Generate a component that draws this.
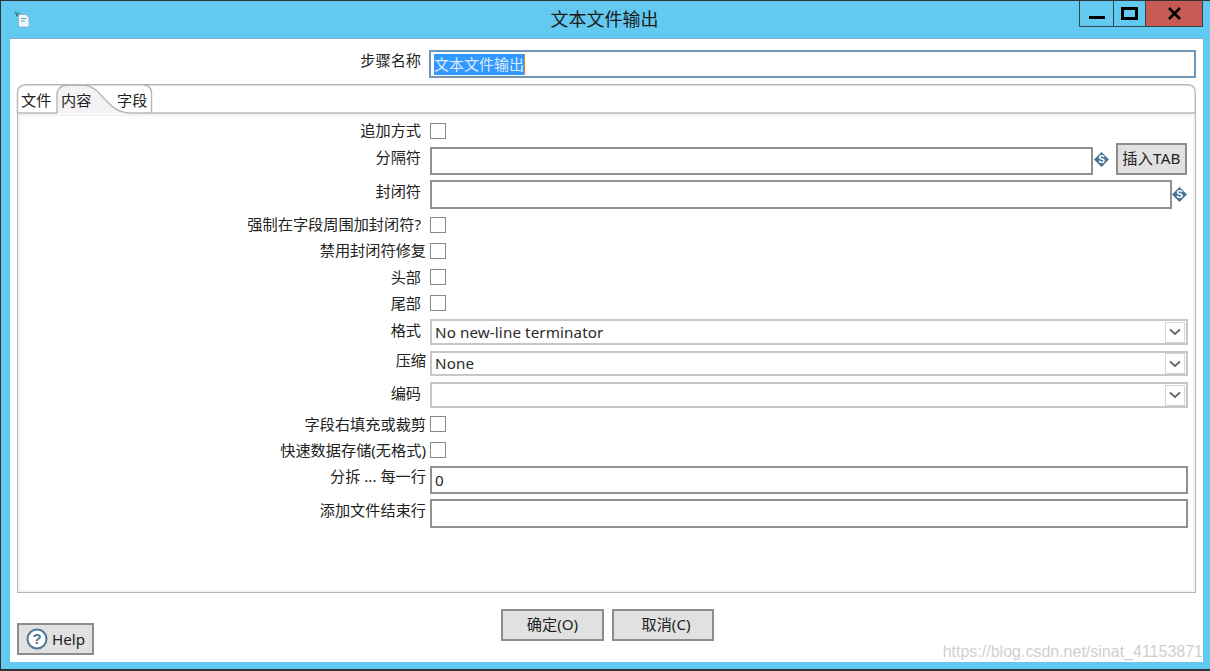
<script>
  const hint = 'x';
</script>

<div class="window">
  <header class="titlebar">
    <div class="appicon">
      <svg width="20" height="20" viewBox="0 0 20 20">
        <path d="M3 2 L7 6 M4 5.5 H7 V2.5" fill="none" stroke="#3d6f8f" stroke-width="1.3"/>
        <path d="M6.5 4.5 H14 L17 7.5 V17 H6.5 Z" fill="#eef7fb" stroke="#8fb4c8" stroke-width="1"/>
        <path d="M9 8.5 H14.5 M9 11 H13" stroke="#6f9ab2" stroke-width="1"/>
      </svg>
    </div>
    <div class="title">文本文件输出</div>
    <div class="controls">
      <div class="ctl min">
        <svg width="16" height="4" viewBox="0 0 16 4"><rect width="16" height="3" fill="#000"/></svg>
      </div>
      <div class="ctl max">
        <svg width="17" height="13" viewBox="0 0 17 13"><rect x="1.5" y="1.5" width="14" height="10" fill="none" stroke="#000" stroke-width="3"/></svg>
      </div>
      <div class="ctl close">
        <svg width="13" height="13" viewBox="0 0 13 13"><path d="M1 1 L12 12 M12 1 L1 12" stroke="#000" stroke-width="2.6"/></svg>
      </div>
    </div>
  </header>

  <main class="client">
    <div class="stepname">
      <div class="label">步骤名称</div>
      <div class="stepinput"><span class="selected">文本文件输出</span></div>
    </div>

    <section class="folder">
      <div class="tabs">
        <svg class="tabshape" width="1180" height="30" viewBox="0 0 1180 30">
          <path d="M1.5 29.5 V9 Q1.5 1 10 .8 H1172 Q1179.3 1 1179.3 9 V30" fill="none" stroke="#b6b6b6" stroke-width="1.4"/>
          <path d="M41 29 V11 Q41 1.5 51 1.2 H68 C86 2 90 28 113 29 Z" fill="#f5f2f6"/>
          <path d="M41 29 V11 Q41 1.5 51 1.2 H68 C86 2 90 28 113 29 H1180" fill="none" stroke="#b6b6b6" stroke-width="1.4"/>
          <path d="M1 29 H41" stroke="#b6b6b6" stroke-width="1.4"/>
          <path d="M135.5 29 V9 Q135.5 2 128 1" fill="none" stroke="#b6b6b6" stroke-width="1.4"/>
        </svg>
        <span class="tab one">文件</span>
        <span class="tab two">内容</span>
        <span class="tab three">字段</span>
      </div>
      <div class="page">
        <div class="pane">
          <div class="row check first"><div class="label up1">追加方式</div><span class="box"></span></div>

          <div class="row tabrow">
            <div class="label">分隔符</div>
            <div class="ctrl">
              <div class="field w663 h28"></div>
              <svg class="var" width="15" height="15" viewBox="0 0 15 15"><path d="M7.5 0 L15 7.5 L7.5 15 L0 7.5 Z" fill="#457394"/><text x="7.5" y="11" text-anchor="middle">S</text></svg>
              <div class="btn insert">插入TAB</div>
            </div>
          </div>

          <div class="row mt5 enc">
            <div class="label">封闭符</div>
            <div class="ctrl">
              <div class="field w742 h29"></div>
              <svg class="var" width="15" height="15" viewBox="0 0 15 15"><path d="M7.5 0 L15 7.5 L7.5 15 L0 7.5 Z" fill="#457394"/><text x="7.5" y="11" text-anchor="middle">S</text></svg>
            </div>
          </div>

          <div class="row check mt3"><div class="label up1">强制在字段周围加封闭符?</div><span class="box"></span></div>
          <div class="row check"><div class="label wide up1">禁用封闭符修复</div><span class="box"></span></div>
          <div class="row check"><div class="label">头部</div><span class="box"></span></div>
          <div class="row check"><div class="label">尾部</div><span class="box"></span></div>

          <div class="row mt3 sel">
            <div class="label lift">格式</div>
            <div class="select"><span>No new-line terminator</span><i class="drop"><svg width="12" height="8" viewBox="0 0 12 8"><path d="M1 1.5 L6 6 L11 1.5" fill="none" stroke="#666" stroke-width="1.8"/></svg></i></div>
          </div>
          <div class="row mt6 sel short">
            <div class="label wide liftmore">压缩</div>
            <div class="select"><span>None</span><i class="drop"><svg width="12" height="8" viewBox="0 0 12 8"><path d="M1 1.5 L6 6 L11 1.5" fill="none" stroke="#666" stroke-width="1.8"/></svg></i></div>
          </div>
          <div class="row mt6 sel">
            <div class="label lift">编码</div>
            <div class="select"><span></span><i class="drop"><svg width="12" height="8" viewBox="0 0 12 8"><path d="M1 1.5 L6 6 L11 1.5" fill="none" stroke="#666" stroke-width="1.8"/></svg></i></div>
          </div>

          <div class="row check mt3"><div class="label wide">字段右填充或裁剪</div><span class="box"></span></div>
          <div class="row check"><div class="label wide">快速数据存储(无格式)</div><span class="box"></span></div>

          <div class="row mt3 txt28">
            <div class="label wide liftsplit">分拆 ... 每一行</div>
            <div class="field full h28 val">0</div>
          </div>
          <div class="row mt5 txt29">
            <div class="label wide liftlast">添加文件结束行</div>
            <div class="field full h29"></div>
          </div>
        </div>
      </div>
    </section>

    <footer class="footer">
      <div class="btn help">
        <svg width="22" height="22" viewBox="0 0 22 22"><circle cx="11" cy="11" r="9.5" fill="#fff" stroke="#4d7596" stroke-width="2"/><text x="11" y="16" text-anchor="middle">?</text></svg>
        <span>Help</span>
      </div>
      <div class="actions">
        <div class="btn action">确定(O)</div>
        <div class="btn action cancel">取消(C)</div>
      </div>
    </footer>
  </main>

  <div class="watermark">https://blog.csdn.net/sinat_41153871</div>
</div>

<style>
  :global(body) { margin: 0; background: #62c9f0; }
  .window {
    position: relative;
    box-sizing: border-box;
    width: 1210px;
    height: 671px;
    overflow: hidden;
    display: flex;
    flex-direction: column;
    background: #62c9f0;
    border-left: 1px solid #2f3336;
    border-top: 1px solid #2f3336;
    border-bottom: 2px solid #2f3336;
    font-family: "Noto Sans", "Noto Sans CJK SC", sans-serif;
    font-size: 15.2px;
    color: #222;
  }
  .titlebar {
    height: 38px;
    flex: none;
    display: grid;
    grid-template-columns: 1fr auto 1fr;
  }
  .appicon { padding: 9px 0 0 11px; }
  .title { font-size: 18px; line-height: 36px; color: #1b1b1b; margin-left: -2px; }
  .controls { justify-self: end; display: flex; height: 26px; margin-right: 7px; border: 1px solid #33454f; border-top: 0; box-sizing: border-box; }
  .ctl { display: flex; justify-content: center; box-sizing: border-box; }
  .min { width: 34px; border-right: 1px solid #33454f; padding-top: 15px; }
  .max { width: 32px; border-right: 1px solid #33454f; padding-top: 6px; }
  .close { width: 56px; background: #c75a52; padding-top: 6px; }

  .client {
    flex: 1;
    display: flex;
    flex-direction: column;
    margin: 0 7px 7px 9px;
    background: #fff;
    box-shadow: 0 -1px 0 #7fb0cc;
  }
  .stepname { display: flex; padding-top: 12px; height: 27px; }
  .stepname .label { width: 411px; text-align: right; line-height: 20px; margin-top: -1px; }
  .stepinput {
    box-sizing: border-box;
    margin: -1px 0 0 8px;
    width: 767px;
    height: 28px;
    border: 2px solid #6f97b5;
    padding: 2px 0 0 3px;
    line-height: 20px;
    font-size: 15px;
  }
  .selected { display: inline-block; height: 21px; background: #3399ff; color: #dcecff; border-right: 1px solid #d9822b; }

  .folder { margin: 6px 0 0 6px; width: 1180px; flex: none; height: 509px; display: flex; flex-direction: column; }
  .tabs { position: relative; height: 30px; flex: none; }
  .tabshape { position: absolute; left: 0; top: 0; }
  .tab { position: absolute; top: 5px; line-height: 22px; }
  .one { left: 5px; }
  .two { left: 45px; }
  .three { left: 101px; }

  .page { flex: 1; display: flex; border: solid #b6b6b6; border-width: 0 1.5px 1.5px; margin-left: 1px; }
  .pane { flex: 1; border: 2px solid #f5f2f6; padding-top: 3px; }

  .row { display: grid; grid-template-columns: 401px 758px; grid-template-rows: minmax(0, 1fr); column-gap: 9px; align-items: center; }
  .check { height: 26px; }
  .first { height: 24px; }
  .tabrow { height: 32px; }
  .enc { height: 29px; }
  .sel { height: 26px; }
  .short { height: 25px; }
  .short .select { height: 25px; padding-bottom: 2px; }
  .short .drop { margin-top: 2px; }
  .txt28 { height: 28px; }
  .txt29 { height: 29px; }
  .mt3 { margin-top: 3px; }
  .mt5 { margin-top: 5px; }
  .mt6 { margin-top: 6px; }

  .label { text-align: right; white-space: nowrap; line-height: 20px; }
  .row .label { justify-self: end; }
  .wide { margin-right: -5px; }
  .up1 { margin-bottom: 2px; }
  .lift { margin-bottom: 4px; }
  .liftmore { margin-bottom: 7px; }
  .liftsplit { margin-bottom: 8px; }
  .liftlast { margin-bottom: 7px; }
  .tabrow .label { margin-bottom: 5px; }
  .enc .label { margin-bottom: 7px; }

  .box { display: block; box-sizing: border-box; width: 16px; height: 16px; border: 1.5px solid #8a8a8a; background: #fff; }
  .ctrl { display: flex; align-items: center; }
  .tabrow .ctrl { height: 32px; align-items: flex-end; }
  .tabrow .var { margin: 0 7px 8px 1px; }
  .field { box-sizing: border-box; border: 2px solid #919191; background: #fff; }
  .w663 { width: 663px; }
  .w742 { width: 742px; }
  .full { width: 758px; }
  .h28 { height: 28px; }
  .h29 { height: 29px; }
  .val { padding: 1px 0 0 3px; line-height: 22px; }
  .var text { fill: #fff; font-size: 10px; font-weight: 700; font-family: "Liberation Sans", sans-serif; }

  .select {
    box-sizing: border-box;
    width: 758px;
    height: 26px;
    border: 2px solid #c6c6cc;
    display: flex;
    align-items: center;
    justify-content: space-between;
    padding: 0 1px 0 3px;
    color: #2b2b2b;
    letter-spacing: 0.1px;
  }
  .drop { box-sizing: border-box; width: 20px; height: 21px; border: 1.5px solid #d4d4d4; display: flex; align-items: center; justify-content: center; }

  .btn {
    box-sizing: border-box;
    background: #e1e1e1;
    border: 2px solid #8d8d8d;
    display: flex;
    align-items: center;
    justify-content: center;
    color: #222;
    white-space: nowrap;
    padding-bottom: 5px;
  }
  .insert { width: 71px; height: 32px; letter-spacing: 0.2px; }

  .footer { flex: 1; display: grid; grid-template-columns: 484px auto; padding-left: 7px; }
  .help { align-self: end; margin-bottom: 7px; width: 77px; height: 32px; gap: 4px; justify-content: flex-start; padding: 0 0 1px 7px; }
  .help text { fill: #4d7596; font-size: 15px; font-weight: 700; font-family: "Liberation Sans", sans-serif; }
  .actions { display: flex; gap: 8px; margin-top: 16px; }
  .action { width: 103px; height: 32px; }
  .cancel { width: 102px; padding-left: 6px; }

  .watermark {
    position: absolute;
    right: 7px;
    bottom: 8px;
    font-family: "Liberation Sans", sans-serif;
    font-size: 16px;
    line-height: 18px;
    color: #cfcfcf;
  }
</style>
